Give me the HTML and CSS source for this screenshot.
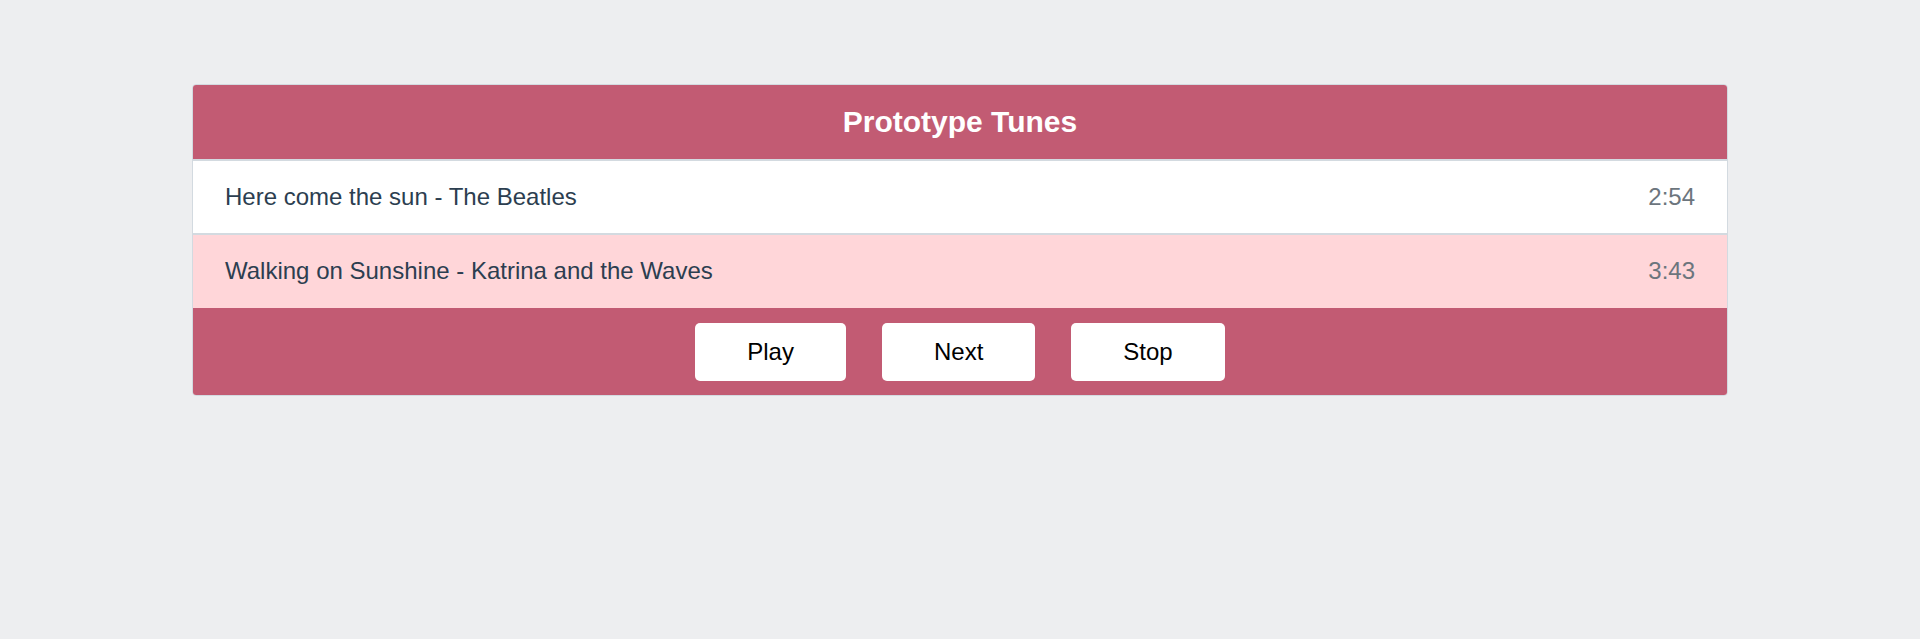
FILE: index.html
```html
<!DOCTYPE html>
<html lang="en">
<head>
<meta charset="utf-8">
<title>Prototype Tunes</title>
<link rel="stylesheet" href="styles.css">
</head>
<body>
<div class="page">
  <div class="player">
    <div class="player-header">Prototype Tunes</div>
    <ul class="tracks">
      <li class="track">
        <span class="track-title">Here come the sun - The Beatles</span>
        <span class="track-time">2:54</span>
      </li>
      <li class="track track-active">
        <span class="track-title">Walking on Sunshine - Katrina and the Waves</span>
        <span class="track-time">3:43</span>
      </li>
    </ul>
    <div class="controls">
      <button class="btn">Play</button>
      <button class="btn">Next</button>
      <button class="btn">Stop</button>
    </div>
  </div>
</div>
</body>
</html>
```

FILE: styles.css
```css
* { box-sizing: border-box; }
html, body {
  margin: 0;
  padding: 0;
  background: #edeef0;
  font-family: "Liberation Sans", Arial, sans-serif;
}
.page {
  padding-top: 84px;
  display: flex;
  justify-content: center;
}
.player {
  width: 1536px;
  border: 1px solid #d3dae0;
  border-radius: 4px;
  overflow: hidden;
  background: #ffffff;
}
.player-header {
  background: #c25b73;
  color: #ffffff;
  font-weight: bold;
  font-size: 30px;
  line-height: 34px;
  padding: 20px 0;
  text-align: center;
  border-bottom: 2px solid #d3dae0;
}
.tracks {
  list-style: none;
  margin: 0;
  padding: 0;
}
.track {
  display: flex;
  justify-content: space-between;
  align-items: center;
  padding: 22px 32px;
  font-size: 24px;
  line-height: 28px;
  color: #2c3e50;
  background: #ffffff;
}
.track + .track {
  border-top: 2px solid #d3dae0;
}
.track-active {
  background: #ffd6d9;
  padding-bottom: 23px;
}
.track-time {
  color: #6c757d;
}
.controls {
  background: #c25b73;
  padding: 15px 0 14px;
  display: flex;
  justify-content: center;
  gap: 36px;
}
.btn {
  font-family: "Liberation Sans", Arial, sans-serif;
  font-size: 24px;
  line-height: 28px;
  padding: 15px 52px;
  border: none;
  border-radius: 5px;
  background: #ffffff;
  color: #000000;
}
```
